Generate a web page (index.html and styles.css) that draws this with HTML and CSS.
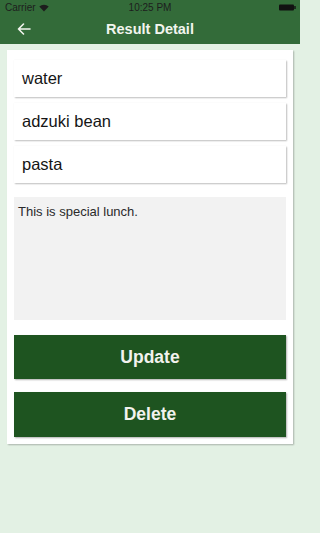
FILE: index.html
```html
<!DOCTYPE html>
<html>
<head>
<meta charset="utf-8">
<link rel="stylesheet" href="styles.css">
</head>
<body>
<div class="screen">
  <header class="topbar">
    <div class="status">
      <div class="status-left">Carrier
        <svg class="wifi" width="10" height="8" viewBox="0 0 10 8"><path d="M5 7.6 L0.3 2.6 A7 7 0 0 1 9.7 2.6 Z" fill="#1d1d1d"/></svg>
      </div>
      <div class="status-time">10:25 PM</div>
      <div class="status-right">
        <svg width="17" height="7" viewBox="0 0 17 7"><rect x="0" y="0.5" width="15" height="6" rx="1" fill="#111"/><rect x="15.3" y="2" width="1.4" height="3" fill="#111"/></svg>
      </div>
    </div>
    <nav class="navbar">
      <svg class="back" width="14" height="12" viewBox="0 0 14 12"><path d="M13 6 H1.5 M6.5 1 L1.5 6 L6.5 11" fill="none" stroke="#f2f5ee" stroke-width="1.6" stroke-linecap="round" stroke-linejoin="round"/></svg>
      <div class="title">Result Detail</div>
    </nav>
  </header>
  <main class="content">
    <section class="card">
      <div class="field">water</div>
      <div class="field">adzuki bean</div>
      <div class="field">pasta</div>
      <div class="note">This is special lunch.</div>
      <button class="btn btn-update">Update</button>
      <button class="btn btn-delete">Delete</button>
    </section>
  </main>
</div>
</body>
</html>
```

FILE: styles.css
```css
* { box-sizing: border-box; }
html, body { margin: 0; padding: 0; }
html { background: #e3f1e4; }
body {
  width: 300px;
  height: 533px;
  background: #e3f1e4;
  font-family: "Liberation Sans", Arial, sans-serif;
  overflow: hidden;
}
.screen { display: flex; flex-direction: column; height: 533px; }
.topbar { background: #336b39; height: 44px; display: flex; flex-direction: column; }
.status {
  height: 15px;
  display: flex;
  align-items: center;
  justify-content: space-between;
  padding: 0 4px 0 5px;
  font-size: 10px;
  color: #1d1d1d;
  position: relative;
}
.status-left { display: flex; align-items: center; gap: 3px; }
.status-time {
  position: absolute;
  left: 0; right: 0;
  text-align: center;
  font-size: 10px;
  color: #1d1d1d;
}
.status-right { display: flex; align-items: center; position: relative; z-index: 1; }
.navbar {
  flex: 1;
  display: flex;
  align-items: center;
  justify-content: center;
  position: relative;
}
.back { position: absolute; left: 17px; top: 8px; }
.title {
  color: #f2f5ee;
  font-weight: bold;
  font-size: 14.5px;
  margin-top: -1px;
}
.content { padding: 6px 7px 0 7px; }
.card {
  background: #fff;
  padding: 10px 7px 7px 7px;
  display: flex;
  flex-direction: column;
  box-shadow: 1px 1px 1.5px rgba(0,0,0,0.25);
}
.field {
  height: 37px;
  background: #fff;
  margin-bottom: 6px;
  padding: 0 8px;
  display: flex;
  align-items: center;
  font-size: 16.5px;
  color: #151515;
  box-shadow: 1px 1px 1.5px rgba(0,0,0,0.25), 0 0 1px rgba(0,0,0,0.06);
}
.field:nth-of-type(3) { margin-bottom: 14px; }
.note {
  height: 123px;
  background: #f2f2f2;
  padding: 7px 4px;
  font-size: 13px;
  color: #2a2a2a;
  margin-bottom: 15px;
}
.btn {
  height: 44px;
  border: none;
  background: #1e5420;
  color: #f2f2ee;
  font-family: inherit;
  font-weight: bold;
  font-size: 17.5px;
  box-shadow: 1px 1px 1.5px rgba(0,0,0,0.3);
  padding: 0;
}
.btn-update { margin-bottom: 13px; }
.btn-delete { height: 45px; }
```
